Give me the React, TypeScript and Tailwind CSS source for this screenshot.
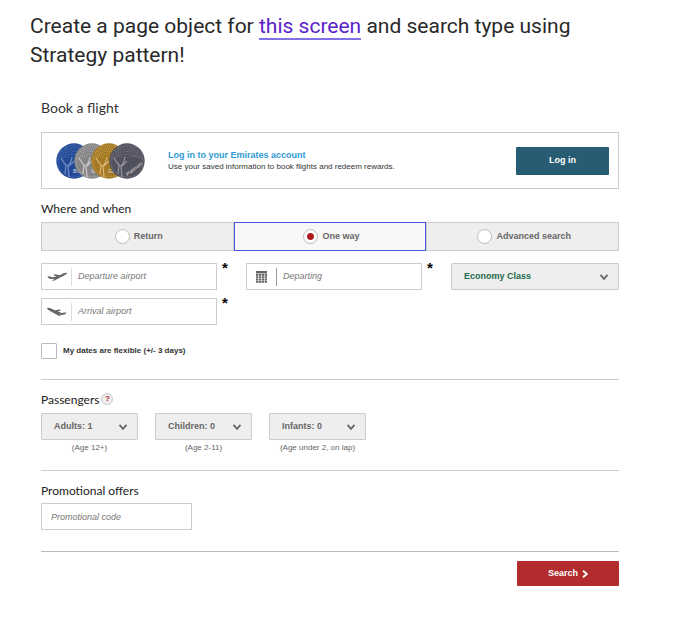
import { useState } from "react";
import type { ReactNode } from "react";

const heading = "font-[Lato,sans-serif] text-[12px] leading-5 text-[#222]";

function Chevron() {
  return (
    <svg
      viewBox="0 0 10 8"
      className="pointer-events-none absolute right-[10px] top-1/2 h-2 w-[10px] -translate-y-1/2"
      fill="none"
      stroke="#666"
      strokeWidth="1.800"
    >
      <path d="M1.500 1.800 5 5.800 8.500 1.800" />
    </svg>
  );
}

function PickList({
  label,
  options,
  className = "text-[#666]",
}: {
  label: string;
  options: string[];
  className?: string;
}) {
  return (
    <div className="relative">
      <select
        aria-label={label}
        className={`block h-[27px] w-full appearance-none rounded-[1px] border border-[#ccc] bg-[#eee] pl-3 text-[9px] font-bold ${className}`}
      >
        {options.map((o) => (
          <option key={o}>{o}</option>
        ))}
      </select>
      <Chevron />
    </div>
  );
}

function Field({
  label,
  icon,
  divider = "border-[#ddd]",
}: {
  label: string;
  icon: ReactNode;
  divider?: string;
}) {
  return (
    <div className="flex">
      <label className="flex h-[27px] min-w-0 flex-1 items-center border border-[#ccc] bg-white">
        <span className={`flex h-[18px] w-[30px] shrink-0 items-center justify-center border-r ${divider}`}>
          {icon}
        </span>
        <input
          aria-label={label}
          placeholder={label}
          required
          className="w-full min-w-0 pl-[6px] text-[9px] italic text-[#666] outline-none placeholder:text-[#777]"
        />
      </label>
      <span className="w-[17px] shrink-0 pl-[5px] text-[15px] font-bold leading-[10px] text-black">*</span>
    </div>
  );
}

function Departure() {
  return (
    <svg viewBox="0 0 20 10" className="h-[10px] w-5" fill="#666">
      <path d="M.2 4.600 2.200 4.200 5.200 5.200 9.500 4.400 6.200 2.900 7.800 2.300 12.800 3.200 16.500 1.300C18 .6 19.600.4 19.900 1 20.200 1.800 18.700 2.600 17.500 3.200L13.200 5.400 7.600 8.500 4.800 8.800 7.600 6.800 3.700 7 2 6.500Z" />
    </svg>
  );
}

function Arrival() {
  return (
    <svg viewBox="0 0 20 10" className="h-[10px] w-5" fill="#666">
      <path d="M.2 1.300C.6.500 2 .7 3.500 1.300L7.700 3.200 12.600 2.500 14.200 3.200 10.900 4.600 14.800 6 18 5.400 19.800 5.800 17.600 7.600 15.200 7.900 12 7.500 14.500 9 11.700 8.700 6.700 5.900 2.200 3.400C1 2.800 0 2.100.2 1.300Z" />
    </svg>
  );
}

function Calendar() {
  return (
    <svg viewBox="0 0 11 12" className="h-3 w-[11px]" fill="#666">
      <path d="M0 0h11v2.500H0z" />
      {[3, 5.300, 7.600, 9.900].map((y) =>
        [0, 2.900, 5.800, 8.700].map((x) => <rect key={`${x}-${y}`} x={x} y={y} width="2.300" height="1.900" />),
      )}
    </svg>
  );
}

const medals = [
  { cx: 18, fill: "#234a96", line: "#7896cc", name: "Blue" },
  { cx: 36, fill: "#858585", line: "#d2d2d2", name: "Silver" },
  { cx: 53, fill: "#a67a23", line: "#dfc081", name: "Gold" },
  { cx: 71, fill: "#51515d", line: "#a0a0aa", name: "Platinum" },
];

function Medals() {
  return (
    <svg viewBox="0 0 90 36" className="h-9 w-[90px] shrink-0" role="img" aria-label="Membership tiers">
      {medals.map((m) => (
        <g key={m.name} transform={`translate(${m.cx} 18)`}>
          <circle r="17.700" fill={m.fill} />
          <circle r="16.200" fill="none" stroke={m.line} strokeWidth=".4" opacity=".7" />
          <g fill="none" stroke={m.line} strokeWidth="1.100" strokeDasharray="1 1.300" opacity=".6">
            <path d="M-9-12Q0-16 9-12M-12-9.500Q0-14 12-9.500M-13.500-7Q0-12 13.500-7M-14.500-4.500Q0-9 14.500-4.500M-15-2Q-10-5-5-4M15-2Q8-6 2-4" />
          </g>
          <path
            d="M-13-3Q-10 2-8 4L-9 13M-2-4Q-3 2-6 5L-5 16M-8 4-6 5M0 0-5 5"
            fill="none"
            stroke={m.line}
            strokeWidth="1.300"
            opacity=".85"
          />
          {m.name === "Platinum" ? (
            <text x="-1" y="15" transform="rotate(-38 0 13)" fontSize="5" fill="#ddd">
              {m.name}
            </text>
          ) : (
            <text x="-1" y="12" fontSize="5" fill="#ddd">
              {m.name}
            </text>
          )}
        </g>
      ))}
    </svg>
  );
}

const passengers = [
  { name: "Adults", note: "(Age 12+)", start: 1 },
  { name: "Children", note: "(Age 2-11)", start: 0 },
  { name: "Infants", note: "(Age under 2, on lap)", start: 0 },
];

export default function App() {
  const [trip, setTrip] = useState("One way");
  return (
    <main className="bg-white pb-8 pt-3 font-['Liberation_Sans',Arial,sans-serif]">
      <h1 className="pl-[30px] pr-[73px] font-[Roboto,sans-serif] text-[21px] leading-[29px] text-[#292929]">
        Create a page object for{" "}
        <a href="#screen" className="border-b-2 border-[#8270e6] text-[#5a22c8]">
          this screen
        </a>{" "}
        and search type using Strategy pattern!
      </h1>

      <form className="ml-[41px] mr-[73px] mt-7" onSubmit={(e) => e.preventDefault()}>
        <h2 className="font-[Lato,sans-serif] text-[14px] leading-5 text-[#333]">Book a flight</h2>

        <section className="mt-[14px] flex h-[57px] items-center border border-[#ccc] pl-[14px] pr-[9px]">
          <Medals />
          <div className="ml-[22px] min-w-0 flex-1">
            <a href="#login" className="block text-[9px] font-bold leading-3 text-[#2e9bd6]">
              Log in to your Emirates account
            </a>
            <p className="text-[8px] leading-3 text-[#333]">
              Use your saved information to book flights and redeem rewards.
            </p>
          </div>
          <button type="button" className="h-7 w-[93px] rounded-[1px] bg-[#285c73] text-[9px] font-bold text-white">
            Log in
          </button>
        </section>

        <h3 className={`mt-[10px] ${heading}`}>Where and when</h3>
        <div className="mt-[3px] grid h-[29px] grid-cols-3 bg-[#eee]">
          {["Return", "One way", "Advanced search"].map((t) => (
            <label
              key={t}
              className={`flex items-center justify-center gap-1 border pl-[3px] text-[9px] font-bold text-[#666] ${
                trip === t ? "border-[#4a5ae0] bg-[#f7f7f7]" : "border-[#ccc]"
              }`}
            >
              <input
                type="radio"
                name="trip"
                checked={trip === t}
                onChange={() => setTrip(t)}
                className="size-[15px] appearance-none rounded-full border border-[#bbb] bg-white checked:border-[#bbb] checked:bg-[radial-gradient(circle,#b01c1c_3px,#fff_4px)]"
              />
              {t}
            </label>
          ))}
        </div>

        <div className="mt-3 grid grid-cols-[1fr_1fr_168px] gap-x-3 gap-y-2">
          <Field label="Departure airport" icon={<Departure />} />
          <Field label="Departing" icon={<Calendar />} divider="border-[#999]" />
          <PickList label="Cabin class" options={["Economy Class", "Business Class", "First Class"]} className="text-[#1f6b4a]" />
          <Field label="Arrival airport" icon={<Arrival />} />
        </div>

        <label className="mt-[18px] flex items-center gap-[6px] text-[8px] font-bold text-[#333]">
          <input type="checkbox" className="size-4 appearance-none rounded-[1px] border border-[#bbb] bg-white checked:bg-[#b01c1c]" />
          My dates are flexible (+/- 3 days)
        </label>

        <section className="mt-5 border-t border-[#ccc] pt-[10px]">
          <div className="flex items-center gap-[2px]">
            <h3 className={heading}>Passengers</h3>
            <button
              type="button"
              aria-label="Passenger help"
              className="mb-[2px] size-3 rounded-full border border-[#ccc] bg-[#eee] text-[8px] font-bold leading-[10px] text-[#b01c1c]"
            >
              ?
            </button>
          </div>
          <div className="mt-[3px] flex gap-[17px]">
            {passengers.map((p) => (
              <div key={p.name} className="w-[97px]">
                <PickList label={p.name} options={[0, 1, 2, 3].map((n) => `${p.name}: ${p.start + n}`)} />
                <p className="mt-[2px] whitespace-nowrap text-center text-[8px] leading-3 text-[#666]">{p.note}</p>
              </div>
            ))}
          </div>
        </section>

        <section className="mt-4 border-t border-[#ccc] pt-[10px]">
          <label htmlFor="promo" className={`block ${heading}`}>
            Promotional offers
          </label>
          <input
            id="promo"
            placeholder="Promotional code"
            className="mt-[2px] block h-[27px] w-[151px] border border-[#ccc] pl-[9px] text-[9px] italic text-[#666] placeholder:text-[#777]"
          />
        </section>

        <div className="mt-[21px] flex justify-end border-t border-[#bbb] pt-[9px]">
          <button
            type="submit"
            className="flex h-[25px] w-[102px] items-center justify-center gap-1 rounded-[1px] bg-[#b22b2d] text-[9px] font-bold text-white"
          >
            Search
            <svg viewBox="0 0 6 8" className="h-2 w-[6px]" fill="none" stroke="currentColor" strokeWidth="1.800">
              <path d="M1 .8 4.800 4 1 7.200" />
            </svg>
          </button>
        </div>
      </form>
    </main>
  );
}
